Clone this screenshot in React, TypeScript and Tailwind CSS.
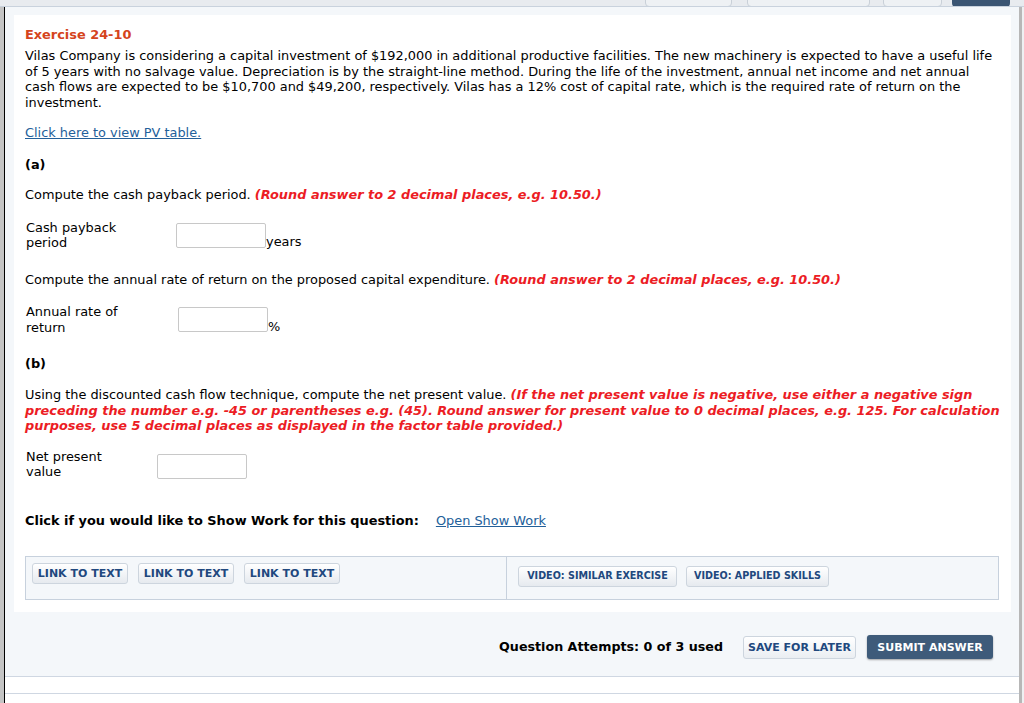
import React from "react";

const Btn = ({ children, w, cls = "" }: { children: React.ReactNode; w: string; cls?: string }) => (
  <div
    className={`${w} ${cls} h-[21px] flex items-center justify-center whitespace-nowrap rounded-[3px] border border-[#cdd5de] bg-gradient-to-b from-[#ffffff] to-[#e6eaef] font-bold text-[#21487e] leading-none`}
  >
    {children}
  </div>
);

export default function App() {
  return (
    <div className="w-[1024px] h-[703px] overflow-hidden bg-white font-['DejaVu_Sans','Verdana',sans-serif] text-[12.9px] text-black flex flex-col">
      {/* top strip */}
      <div className="h-[7px] shrink-0 bg-[#e8ebef] border-b border-[#c9d2dd] flex items-end justify-end overflow-hidden pr-[14px]">
        <div className="flex items-end mb-[-1px]">
          <div className="w-[87px] h-[20px] rounded-[4px] border border-[#c9d0d8] bg-[#eef1f4]" />
          <div className="ml-[15px] w-[123px] h-[20px] rounded-[4px] border border-[#c9d0d8] bg-[#eef1f4]" />
          <div className="ml-[13px] w-[59px] h-[20px] rounded-[4px] border border-[#c9d0d8] bg-[#eef1f4]" />
          <div className="ml-[10px] w-[58px] h-[20px] rounded-[4px] bg-[#3b5573]" />
        </div>
      </div>
      <div className="flex-1 flex">
        <div className="w-[4px] bg-[#c4c4c4]" />
        <div className="w-[1px] bg-black" />
        <div className="flex-1 flex flex-col bg-white">
          <div className="bg-[#f4f7fa] pt-[8px] pl-[9px] pr-[8px]">
            {/* card */}
            <div className="bg-white pl-[11px] pr-[10px] pt-[12px] pb-[12px]">
              <div className="leading-[16px] font-bold text-[#d5441d]">Exercise 24-10</div>
              <p className="mt-[5px] leading-[15.5px]">
                Vilas Company is considering a capital investment of $192,000 in additional productive facilities. The new machinery is expected to have a useful life of 5 years with no salvage value. Depreciation is by the straight-line method. During the life of the investment, annual net income and net annual cash flows are expected to be $10,700 and $49,200, respectively. Vilas has a 12% cost of capital rate, which is the required rate of return on the investment.
              </p>
              <div className="mt-[15px] leading-[16px]">
                <span className="text-[#23609a] underline">Click here to view PV table.</span>
              </div>
              <div className="mt-[16px] leading-[16px] font-bold">(a)</div>
              <div className="mt-[14px] leading-[16px]">
                Compute the cash payback period.{" "}
                <span className="text-[#ec1c24] font-bold italic">(Round answer to 2 decimal places, e.g. 10.50.)</span>
              </div>
              <div className="mt-[17px] flex items-start">
                <div className="w-[151px] pl-[1px] leading-[15px]">
                  Cash payback
                  <br />
                  period
                </div>
                <div className="flex items-end mt-[3px]">
                  <div className="w-[90px] h-[25px] rounded-[2px] border border-[#c8c8c8] bg-white" />
                  <span className="leading-[13px]">years</span>
                </div>
              </div>
              <div className="mt-[22px] leading-[16px]">
                Compute the annual rate of return on the proposed capital expenditure.{" "}
                <span className="text-[#ec1c24] font-bold italic">(Round answer to 2 decimal places, e.g. 10.50.)</span>
              </div>
              <div className="mt-[16px] flex items-start">
                <div className="w-[153px] pl-[1px] leading-[15.5px]">
                  Annual rate of
                  <br />
                  return
                </div>
                <div className="flex items-end mt-[3px]">
                  <div className="w-[90px] h-[25px] rounded-[2px] border border-[#c8c8c8] bg-white" />
                  <span className="leading-[13px] mb-[-1px]">%</span>
                </div>
              </div>
              <div className="mt-[21px] leading-[16px] font-bold">(b)</div>
              <p className="mt-[15px] leading-[15.5px]">
                Using the discounted cash flow technique, compute the net present value.{" "}
                <span className="text-[#ec1c24] font-bold italic">
                  (If the net present value is negative, use either a negative sign preceding the number e.g. -45 or parentheses e.g. (45). Round answer for present value to 0 decimal places, e.g. 125. For calculation purposes, use 5 decimal places as displayed in the factor table provided.)
                </span>
              </p>
              <div className="mt-[15px] flex items-start">
                <div className="w-[132px] pl-[1px] leading-[15px]">
                  Net present
                  <br />
                  value
                </div>
                <div className="mt-[5px] w-[90px] h-[25px] rounded-[2px] border border-[#c8c8c8] bg-white" />
              </div>
              <div className="mt-[34px] leading-[16px] flex">
                <span className="font-bold">Click if you would like to Show Work for this question:</span>
                <span className="ml-[17px] text-[#23609a] underline">Open Show Work</span>
              </div>
              {/* link panel */}
              <div className="mt-[27px] mr-[2px] h-[44px] border border-[#c7d1dd] bg-[#f4f7fa] flex">
                <div className="w-[481px] border-r border-[#c7d1dd] flex items-start gap-[10px] pl-[6px] pt-[6px] text-[11px]">
                  <Btn w="w-[96px]">LINK TO TEXT</Btn>
                  <Btn w="w-[96px]">LINK TO TEXT</Btn>
                  <Btn w="w-[96px]">LINK TO TEXT</Btn>
                </div>
                <div className="flex-1 flex items-start gap-[9px] pl-[11px] pt-[9px] text-[9.6px]">
                  <Btn w="w-[159px]">VIDEO: SIMILAR EXERCISE</Btn>
                  <Btn w="w-[143px]">VIDEO: APPLIED SKILLS</Btn>
                </div>
              </div>
            </div>
            {/* bottom bar */}
            <div className="h-[64px] flex items-center justify-end pr-[18px]">
              <span className="text-[12.7px] font-bold mr-[20px] mt-[7px]">Question Attempts: 0 of 3 used</span>
              <div className="mt-[7px] w-[113px] h-[23px] flex items-center justify-center rounded-[3px] border border-[#cdd5de] bg-gradient-to-b from-[#ffffff] to-[#eaeef2] text-[11px] font-bold text-[#21487e] leading-none">
                SAVE FOR LATER
              </div>
              <div className="ml-[11px] mt-[7px] w-[126px] h-[24px] flex items-center justify-center rounded-[3px] bg-[#3e5b7a] shadow-[0_1px_2px_rgba(0,0,0,0.35)] text-[11px] font-bold text-white leading-none">
                SUBMIT ANSWER
              </div>
            </div>
          </div>
          <div className="h-[18px] border-t border-b border-[#cfd7e2] bg-white" />
          <div className="flex-1 bg-white" />
        </div>
        <div className="w-[3px] bg-[#b7b7b7]" />
        <div className="w-[2px] bg-[#eef0f2]" />
      </div>
    </div>
  );
}
